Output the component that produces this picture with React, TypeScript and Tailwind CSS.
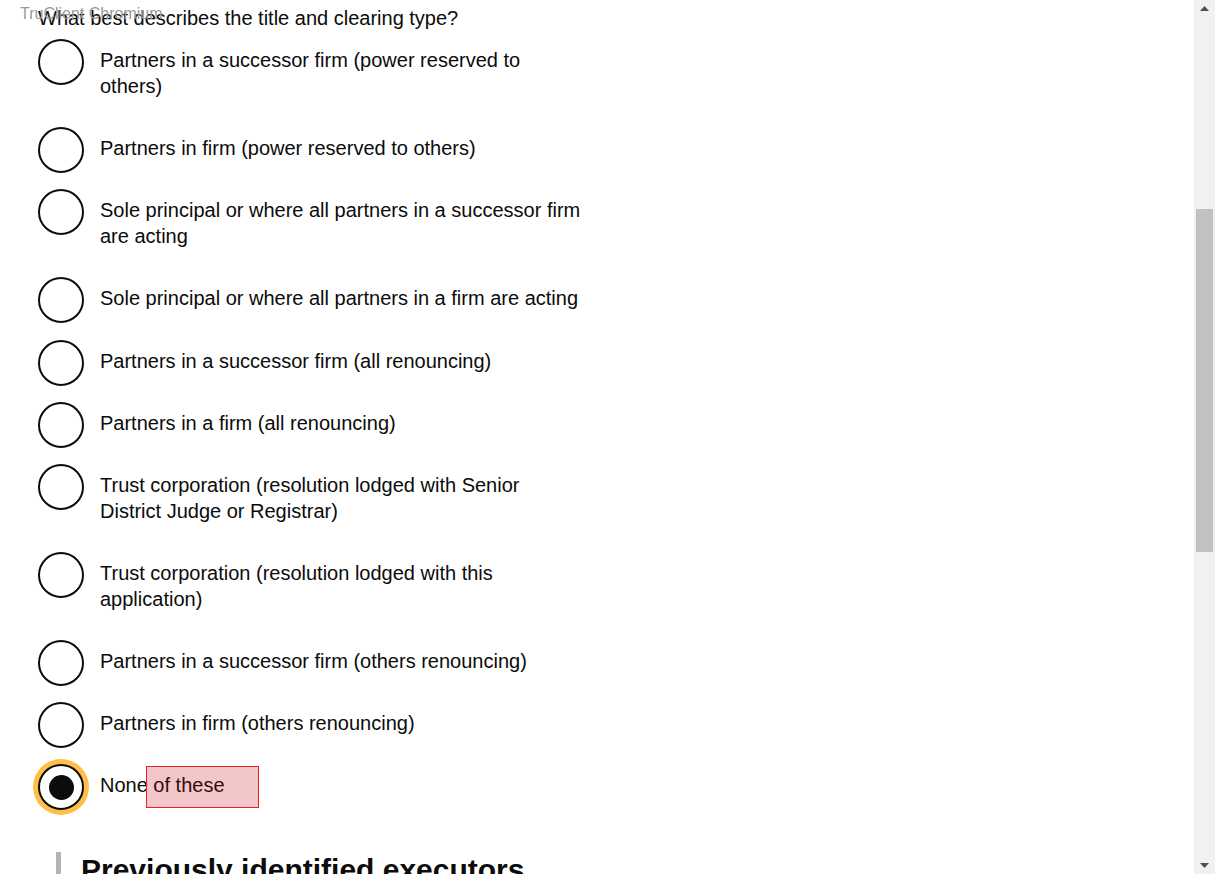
import React from "react";

const options = [
  "Partners in a successor firm (power reserved to others)",
  "Partners in firm (power reserved to others)",
  "Sole principal or where all partners in a successor firm are acting",
  "Sole principal or where all partners in a firm are acting",
  "Partners in a successor firm (all renouncing)",
  "Partners in a firm (all renouncing)",
  "Trust corporation (resolution lodged with Senior District Judge or Registrar)",
  "Trust corporation (resolution lodged with this application)",
  "Partners in a successor firm (others renouncing)",
  "Partners in firm (others renouncing)",
  "None of these",
];

function Radio({ label, checked }: { label: string; checked?: boolean }) {
  return (
    <div className="flex items-start gap-4 mb-[16.15px]">
      <div
        className={
          "w-[46px] h-[46px] shrink-0 rounded-full border-2 border-[#0b0c0c] bg-white flex items-center justify-center " +
          (checked ? "shadow-[0_0_0_5px_#ffbf47]" : "")
        }
      >
        {checked && <div className="w-[25px] h-[25px] rounded-full bg-[#0b0c0c]" />}
      </div>
      <label className="relative pt-2 pb-3 max-w-[484px] text-[20px] leading-[26px]">
        {label}
        {checked && (
          <span className="absolute left-[46px] top-[2px] w-[113px] h-[42px] border border-[#f01e1e] bg-[rgba(200,0,10,0.22)]" />
        )}
      </label>
    </div>
  );
}

export default function App() {
  return (
    <div
      className="flex h-screen overflow-hidden bg-white text-[#0b0c0c]"
      style={{ fontFamily: '"Liberation Sans", Arial, sans-serif' }}
    >
      <main className="relative flex-1 pl-[38px] pt-[5px]">
        {/* recorder label sitting over the page */}
        <span className="absolute left-[20px] top-[5px] text-[16px] leading-[18px] text-[#9a9a9a]">
          TruClient Chromium
        </span>

        <fieldset>
          <legend className="text-[20px] leading-[26px] mb-2">
            What best describes the title and clearing type?
          </legend>
          <div>
            {options.map((o, i) => (
              <Radio key={o} label={o} checked={i === options.length - 1} />
            ))}
          </div>
        </fieldset>

        <div className="ml-[18px] mt-[25px] border-l-[5px] border-[#b1b4b6] pl-[20px]">
          <h2 className="text-[30px] leading-[36px] font-bold">
            Previously identified executors
          </h2>
        </div>
      </main>

      {/* scrollbar */}
      <div className="w-[21px] shrink-0 bg-[#f1f1f1] flex flex-col">
        <div className="h-[17px] flex items-center justify-center">
          <svg width="9" height="5" viewBox="0 0 9 5">
            <path d="M0 5 L4.5 0 L9 5 Z" fill="#505050" />
          </svg>
        </div>
        <div className="h-[192px]" />
        <div className="h-[343px] mx-[2px] bg-[#c1c1c1]" />
        <div className="flex-1" />
        <div className="h-[17px] flex items-center justify-center">
          <svg width="9" height="5" viewBox="0 0 9 5">
            <path d="M0 0 L9 0 L4.5 5 Z" fill="#505050" />
          </svg>
        </div>
      </div>
    </div>
  );
}
